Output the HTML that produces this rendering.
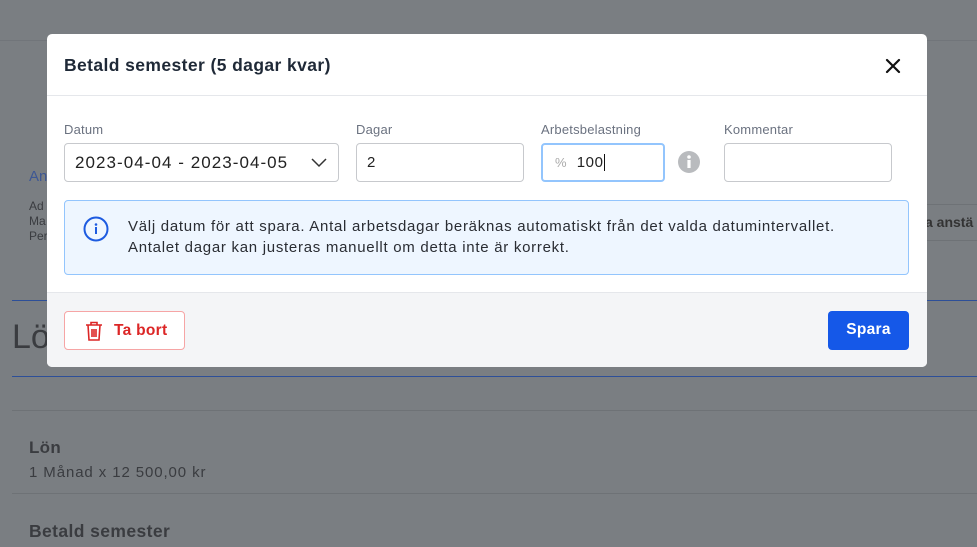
<!DOCTYPE html>
<html><head><style>
*{box-sizing:border-box;margin:0;padding:0}
body{width:977px;height:547px;overflow:hidden;background:#7a7e82;font-family:"Liberation Sans",sans-serif;position:relative;color:#222}
.abs{position:absolute}
.bg{color:#3a3c40}
.modal{position:absolute;left:47px;top:34px;width:880px;height:333px;background:#fff;border-radius:5px;overflow:hidden}
.hdr{height:62px;border-bottom:1px solid #e5e7eb;padding:21px 17px;font-size:17.5px;letter-spacing:0.4px;font-weight:bold;color:#1f2937}
.lbl{position:absolute;font-size:13px;color:#6b7280;top:88px;letter-spacing:0.2px}
.inp{position:absolute;top:109px;height:39px;border:1px solid #c7c9cd;border-radius:4px;font-size:15px;color:#222;padding:10px}
.info{position:absolute;left:17px;top:166px;width:845px;height:75px;background:#eef6ff;border:1px solid #93c5fd;border-radius:4px;font-size:15px;letter-spacing:0.72px;color:#2a2d33;line-height:21px;padding:15px 0 0 63px}
.foot{position:absolute;left:0;top:258px;width:880px;height:75px;background:#f4f5f7;border-top:1px solid #e5e7eb}
</style></head><body>
<div class="abs" style="left:0;top:40px;width:977px;height:1px;background:#71757a"></div>
<div class="abs bg" style="left:29px;top:168px;font-size:15px;color:#3d5794">An</div>
<div class="abs bg" style="left:29px;top:199px;font-size:12px;line-height:15px">Ad<br>Ma<br>Per</div>
<div class="abs" style="left:900px;top:204px;width:77px;height:37px;border:1px solid #6e7276;border-right:none;font-size:14px;font-weight:bold;color:#333;padding:9px 0 0 24px">a anstä</div>
<div class="abs" style="left:12px;top:300px;width:965px;height:1px;background:#2d4f98"></div>
<div class="abs bg" style="left:12px;top:318px;font-size:34px">Lö</div>
<div class="abs" style="left:12px;top:376px;width:965px;height:1px;background:#2d4f98"></div>
<div class="abs" style="left:12px;top:410px;width:965px;height:1px;background:#6e7276"></div>
<div class="abs bg" style="left:29px;top:438px;font-size:17px;font-weight:bold;letter-spacing:0.3px">Lön</div>
<div class="abs bg" style="left:29px;top:464px;font-size:15px;letter-spacing:0.9px">1 Månad x 12 500,00 kr</div>
<div class="abs" style="left:12px;top:493px;width:965px;height:1px;background:#6e7276"></div>
<div class="abs bg" style="left:29px;top:521px;font-size:17.5px;font-weight:bold;letter-spacing:0.4px">Betald semester</div>

<div class="modal">
<div class="hdr">Betald semester (5 dagar kvar)</div>
<svg class="abs" style="left:838px;top:24px" width="16" height="16" viewBox="0 0 16 16"><path d="M2 2L14 14M14 2L2 14" stroke="#111" stroke-width="2.2" stroke-linecap="round"/></svg>
<div class="lbl" style="left:17px">Datum</div>
<div class="inp" style="left:17px;width:275px;font-size:17px;letter-spacing:1.05px;padding-top:9px">2023-04-04 - 2023-04-05
<svg class="abs" style="left:246px;top:14px" width="16" height="10" viewBox="0 0 16 10"><path d="M1 1L8 8L15 1" stroke="#333" stroke-width="1.5" fill="none"/></svg></div>
<div class="lbl" style="left:309px">Dagar</div>
<div class="inp" style="left:309px;width:168px">2</div>
<div class="lbl" style="left:494px">Arbetsbelastning</div>
<div class="inp" style="left:494px;width:124px;border:2px solid #93c5fd;padding:9px 12px;letter-spacing:0.6px"><span style="color:#aaa;font-size:13px">%</span>&nbsp;&nbsp;100<span style="border-left:1px solid #111;margin-left:0"></span></div>
<svg class="abs" style="left:631px;top:117px" width="22" height="22" viewBox="0 0 22 22"><circle cx="11" cy="11" r="11" fill="#b9bbbe"/><circle cx="11" cy="6" r="1.8" fill="#fff"/><rect x="9.4" y="9" width="3.2" height="8" fill="#fff"/></svg>
<div class="lbl" style="left:677px">Kommentar</div>
<div class="inp" style="left:677px;width:168px"></div>
<div class="info"><svg class="abs" style="left:18px;top:15px" width="26" height="26" viewBox="0 0 26 26"><circle cx="13" cy="13" r="11.5" stroke="#1d5be0" stroke-width="2" fill="none"/><circle cx="13" cy="8.5" r="1.3" fill="#1d5be0"/><rect x="12" y="11" width="2" height="7" fill="#1d5be0"/></svg>Välj datum för att spara. Antal arbetsdagar beräknas automatiskt från det valda datumintervallet.<br>Antalet dagar kan justeras manuellt om detta inte är korrekt.</div>
<div class="foot">
<div class="abs" style="left:17px;top:18px;width:121px;height:39px;border:1px solid #f6a5a5;border-radius:4px;background:#fff;color:#dc2626;font-weight:bold;font-size:15.5px;letter-spacing:0.3px;padding:10px 0 0 49px">Ta bort
<svg class="abs" style="left:20px;top:9px" width="18" height="20" viewBox="0 0 18 20"><path d="M1 4H17M6 4V1.5H12V4M3 4L4 19H14L15 4M7 8V16M9 8V16M11 8V16" stroke="#dc2626" stroke-width="1.6" fill="none"/></svg></div>
<div class="abs" style="left:781px;top:18px;width:81px;height:39px;background:#1558e8;border-radius:4px;color:#fff;font-weight:bold;font-size:15.5px;letter-spacing:0.3px;text-align:center;padding-top:10px">Spara</div>
</div>
</div>
</body></html>
